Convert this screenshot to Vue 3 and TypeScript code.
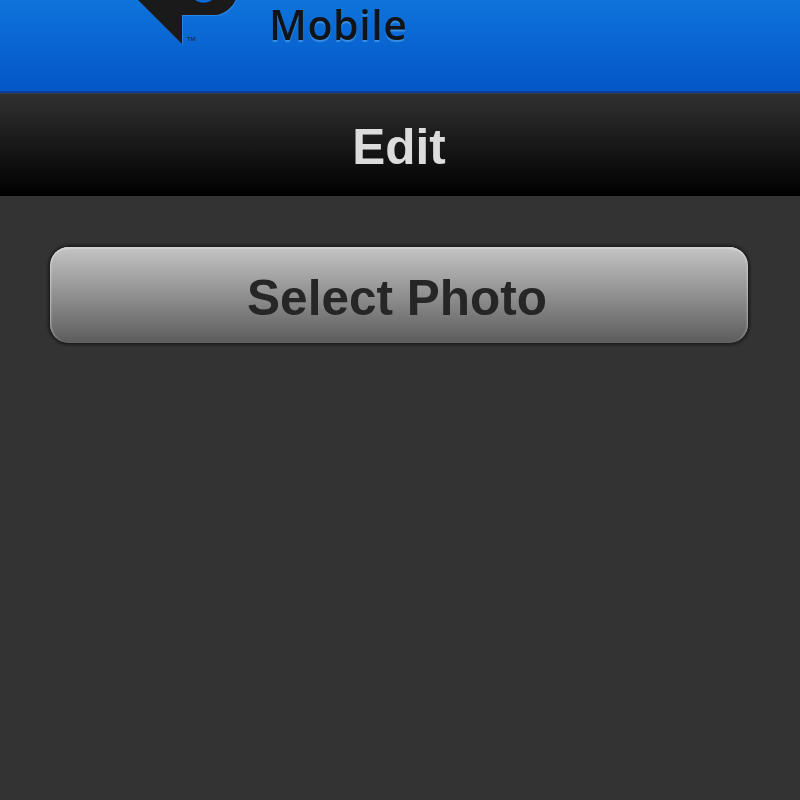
<script setup lang="ts">
const title = 'Edit'
const action = 'Select Photo'
</script>

<template>
  <div class="page">
    <header class="brand">
      <svg class="logo" width="114" height="48" viewBox="0 0 114 48">
        <path d="M13 -1 L59 45 L59 16 L93 16 C102 15 110 8 113 -1 Z" fill="#3a8be6" opacity="0.7" />
        <path d="M13 -1 L58 44 L58 15 L92 15 C101 14 109 7 112 -1 Z" fill="#1a1a1a" />
        <path d="M70 -1 C75 4 84 4 89 -1 Z" fill="#0a6ad8" />
        <text x="63" y="41" class="tm">TM</text>
      </svg>
      <div class="name">Mobile</div>
    </header>
    <nav class="bar"><span class="soft">{{ title }}</span></nav>
    <main class="content">
      <button class="btn"><span class="soft">{{ action }}</span></button>
    </main>
  </div>
</template>

<style>
html, body { margin: 0; background: #333333; }
</style>

<style scoped>
.page {
  width: 800px;
  height: 800px;
  background: #333333;
  overflow: hidden;
  display: flex;
  flex-direction: column;
}
.brand {
  flex: none;
  box-sizing: border-box;
  height: 93px;
  border-bottom: 2px solid #063f9e;
  background: linear-gradient(#0e74dc, #0556c6);
  display: flex;
  align-items: flex-start;
  padding-left: 124px;
}
.logo { flex: none; display: block; }
.name {
  margin-left: 31px;
  margin-top: 1px;
  font: 600 41px/46px "Open Sans", "Noto Sans", sans-serif;
  letter-spacing: 0.6px;
  color: #101418;
  filter: blur(0.5px);
  text-shadow: 0 2px 1px rgba(90, 170, 240, 0.6);
}
.tm { font: 6px "Liberation Sans", sans-serif; fill: #1a1a1a; }
.bar {
  height: 103px;
  flex: none;
  box-sizing: border-box;
  border-top: 1px solid #3a3a3a;
  padding: 2px 2px 0 0;
  background: linear-gradient(#303030, #000000);
  display: flex;
  align-items: center;
  justify-content: center;
  font: bold 49.5px "Liberation Sans", sans-serif;
  color: #dcdcdc;
}
.soft { display: block; filter: blur(0.6px); }
.content {
  flex: 1;
  padding: 51px 52px 0 50px;
}
.btn {
  display: block;
  width: 100%;
  height: 96px;
  box-sizing: border-box;
  border: 0;
  border-radius: 19px;
  background: linear-gradient(#c4c4c4, #5c5c5c);
  box-shadow: 0 0 3px 2px #1c1c1c, inset 0 3px 1px -1px #d4d4d4, inset 2px 0 2px -1px rgba(255, 255, 255, 0.45), inset -2px 0 2px -1px rgba(255, 255, 255, 0.35);
  font: bold 49.5px "Liberation Sans", sans-serif;
  color: #262626;
  padding: 4px 4px 0 0;
}
</style>
